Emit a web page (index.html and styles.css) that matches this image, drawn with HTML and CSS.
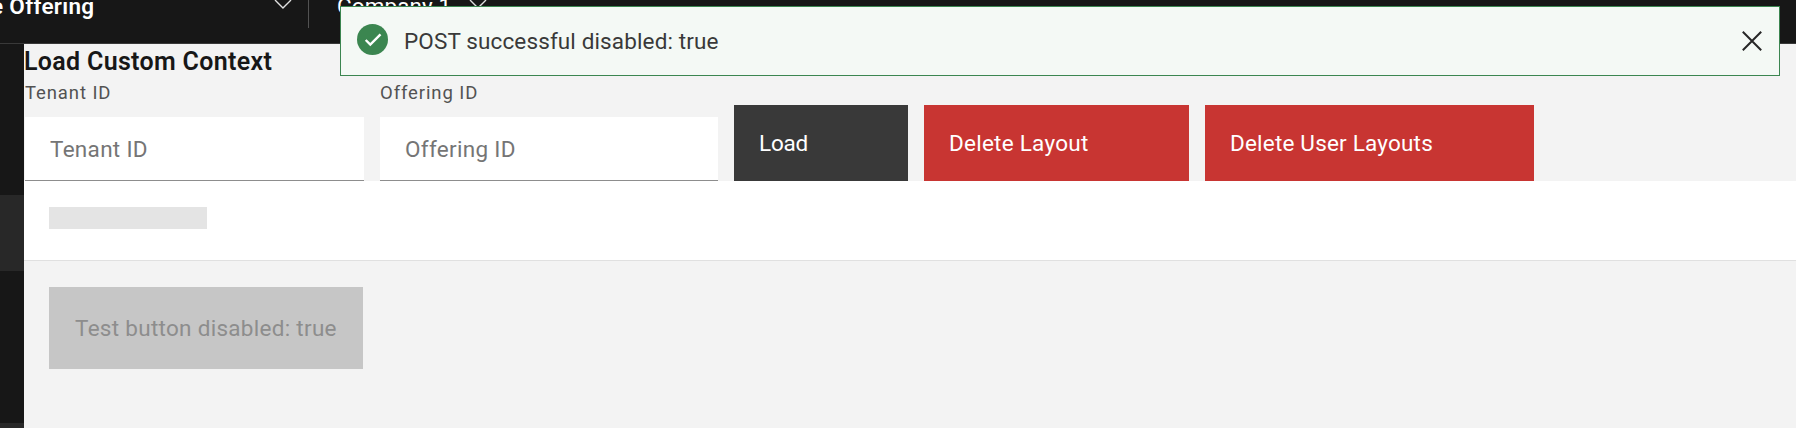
FILE: index.html
```html
<!DOCTYPE html>
<html lang="en">
<head>
<meta charset="utf-8">
<title>Load Custom Context</title>
<link rel="stylesheet" href="styles.css">
</head>
<body>
<header class="topbar">
  <div class="product"><span class="product-name">e <span class="product-word">Offering</span></span>
    <svg class="chevron" width="18" height="11" viewBox="0 0 18 11"><path d="M1 1l8 8 8-8"/></svg>
  </div>
  <div class="company"><span class="company-name">Company 1</span>
    <svg class="chevron" width="18" height="11" viewBox="0 0 18 11"><path d="M1 1l8 8 8-8"/></svg>
  </div>
</header>
<div class="shell">
  <nav class="rail"><div class="rail-active"></div><div class="rail-next"></div></nav>
  <main class="main">
    <section class="context">
      <h1 class="title">Load Custom Context</h1>
      <form class="controls">
        <div class="field field-tenant"><label class="label" for="tenant">Tenant ID</label><input class="input" id="tenant" placeholder="Tenant ID"></div>
        <div class="field field-offering"><label class="label" for="offering">Offering ID</label><input class="input" id="offering" placeholder="Offering ID"></div>
        <button type="button" class="btn btn-load">Load</button>
        <button type="button" class="btn btn-layout">Delete Layout</button>
        <button type="button" class="btn btn-user">Delete User Layouts</button>
      </form>
    </section>
    <section class="heading"><div class="skeleton"></div></section>
    <section class="body"><button type="button" class="btn btn-test" disabled>Test button disabled: true</button></section>
  </main>
</div>
<div class="toast" role="status">
  <svg class="toast-icon" width="31" height="31" viewBox="0 0 31 31"><circle cx="15.5" cy="15.5" r="15.5"/><path d="M8.7 16l4.6 4.6L23.5 10.4"/></svg>
  <span class="toast-text">POST successful disabled: true</span>
  <svg class="toast-close" width="20" height="20" viewBox="0 0 20 20"><path d="M.8.8l18.4 18.4M19.2.8L.8 19.2"/></svg>
</div>
</body>
</html>
```
FILE: styles.css
```css
* { box-sizing: border-box; }
body {
  margin: 0;
  height: 428px;
  overflow: hidden;
  position: relative;
  background: #f3f3f3;
  color: #171717;
  font: 22.5px/28px Roboto, "Noto Sans", sans-serif;
  white-space: nowrap;
}
.topbar {
  display: flex;
  align-items: center;
  height: 76px;
  margin-top: -32px;
  background: #171717;
  border-bottom: 1px solid #393939;
  color: #fff;
}
.product {
  display: flex;
  align-items: center;
  justify-content: space-between;
  width: 309px;
  height: 44px;
  padding-right: 16px;
  border-right: 1px solid #525252;
}
.product-name { margin-left: -9px; font-weight: 600; letter-spacing: .3px; }
.company { display: flex; align-items: center; padding-left: 28px; }
.company-name { width: 132px; letter-spacing: .1px; }
.chevron { fill: none; stroke: #e0e0e0; stroke-width: 1.4; position: relative; top: -1px; }
.shell { display: flex; height: 384px; }
.rail { width: 24px; flex: none; background: #171717; padding-top: 151px; }
.rail-active { height: 76px; background: #282828; }
.rail-next { height: 5px; margin-top: 152px; background: #282828; }
.main { flex: 1; min-width: 0; }
.context { height: 137px; padding: 2px 0 0 1px; }
.title { margin: 0 0 0 -1px; font-size: 25px; line-height: 32px; font-weight: 600; letter-spacing: .32px; }
.controls { display: flex; align-items: flex-end; gap: 16px; padding-top: 3px; }
.field { display: flex; flex-direction: column; gap: 12px; }
.field-tenant { width: 339px; }
.field-offering { width: 338px; }
.label { font-size: 18.5px; line-height: 24px; letter-spacing: .9px; color: #525252; }
.input {
  width: 100%;
  height: 64px;
  padding: 1px 25px 0;
  border: 0;
  border-bottom: 1px solid #8d8d8d;
  border-radius: 0;
  background: #fff;
  font: inherit;
  letter-spacing: .3px;
  outline: 0;
}
.input::placeholder { color: #757575; opacity: 1; }
.btn { height: 76px; padding: 0 25px; border: 0; font: inherit; letter-spacing: .25px; text-align: left; color: #fff; }
.btn-load { width: 174px; background: #393939; letter-spacing: -.2px; }
.btn-layout { width: 265px; background: #c83532; }
.btn-user { width: 329px; background: #c83532; letter-spacing: .2px; }
.heading { height: 80px; padding: 26px 25px; background: #fff; border-bottom: 1px solid #e0e0e0; }
.skeleton { width: 158px; height: 22px; background: #e4e4e4; }
.body { padding: 26px 25px; }
.btn-test { display: block; width: 314px; height: 82px; padding: 0 26px 1px; background: #c6c6c6; color: #8d8d8d; letter-spacing: .29px; }
.toast {
  position: absolute;
  left: 340px;
  top: 6px;
  width: 1440px;
  height: 70px;
  display: flex;
  align-items: center;
  padding: 0 17px 0 16px;
  border: 1px solid #3b8650;
  background: #f4f9f5;
  color: #393939;
}
.toast-icon { fill: #3b8650; margin-top: -3px; }
.toast-icon path { fill: none; stroke: #fff; stroke-width: 2.4; }
.toast-text { margin-left: 16px; letter-spacing: .13px; }
.toast-close { margin-left: auto; fill: none; stroke: #262626; stroke-width: 2; }
```
